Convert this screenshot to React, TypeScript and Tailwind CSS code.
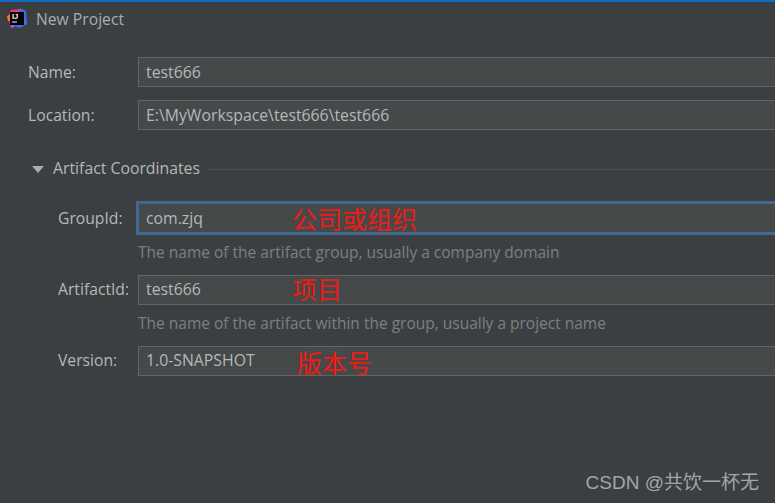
import React from 'react';

const uiFont = "font-['Open_Sans','Noto_Sans_CJK_SC',sans-serif]";

const Field: React.FC<{
  label: string;
  value: string;
  indent?: boolean;
  focused?: boolean;
  nudge?: boolean;
  note?: string;
  noteClass?: string;
}> = ({ label, value, indent, focused, nudge, note, noteClass }) => (
  <div className="flex items-center">
    <div
      className={`w-[138px] shrink-0 text-[15.7px] text-[#b4b8ba] ${indent ? 'pl-[58px]' : 'pl-[28px]'} ${
        nudge ? 'pt-[2px]' : ''
      }`}
    >
      {label}
    </div>
    <div
      className={`relative flex h-[30px] w-[660px] shrink-0 items-center bg-[#45494a] text-[15.8px] text-[#b4b8ba] ${
        focused ? 'pl-[8px] shadow-[0_0_0_2px_#3f6892,inset_0_0_0_1px_#3f6892]' : 'border border-[#646464] pl-[7px]'
      } ${nudge ? 'pt-[2px]' : ''}`}
    >
      {value}
      {note && (
        <span className={`absolute font-['Noto_Sans_CJK_SC',sans-serif] text-[25px] leading-none text-[#f01a14] ${noteClass}`}>
          {note}
        </span>
      )}
    </div>
  </div>
);

const Logo = () => (
  <svg width="21" height="21" viewBox="0 0 21 21" className="shrink-0">
    <path d="M1 9 L4 2 L13 1 L13 12 L6 19 L3 15 Z" fill="#f5317f" />
    <path d="M0 8 L4 6 L5 13 L1 13 Z" fill="#f97a12" />
    <path d="M13 0 L19 3 L20 16 L13 20 L7 18 Z" fill="#3b6fe0" />
    <path d="M2 13 L8 19 L4 20 Z" fill="#b74af7" />
    <rect x="3" y="4" width="14" height="13" fill="#000" />
    <text x="5" y="11" fontSize="7.5" fontWeight="700" fill="#fff" fontFamily="Liberation Sans, sans-serif">IJ</text>
    <rect x="5" y="13.5" width="5" height="1" fill="#fff" />
  </svg>
);

const App: React.FC = () => (
  <div className={`relative h-[503px] w-[775px] overflow-hidden border-t-2 border-[#0a6cc4] bg-[#3c3f41] ${uiFont}`}>
    <div className="flex h-[33px] items-center gap-[8px] pl-[7px] text-[15.7px] text-[#a9adaf]">
      <Logo />
      <span className="pt-[2px]">New Project</span>
    </div>

    <div className="mt-[22px] flex flex-col gap-[13px]">
      <Field label="Name:" value="test666" nudge />
      <Field label="Location:" value="E:\MyWorkspace\test666\test666" nudge />
    </div>

    <div className="mt-[28px] flex h-[20px] items-center pl-[32px] pt-[2px] text-[15.8px] text-[#b4b8ba]">
      <span className="h-0 w-0 border-x-[6px] border-t-[7px] border-x-transparent border-t-[#a9adaf]" />
      <span className="ml-[9px]">Artifact Coordinates</span>
      <span className="ml-[8px] h-px flex-1 bg-[#515151]" />
    </div>

    <div className="mt-[25px]">
      <Field label="GroupId:" value="com.zjq" indent focused nudge note="公司或组织" noteClass="left-[154px] top-[3px]" />
      <div className="mt-[9px] h-[20px] pl-[138px] text-[15.5px] leading-[20px] text-[#7c7f81]">
        The name of the artifact group, usually a company domain
      </div>
    </div>

    <div className="mt-[13px]">
      <Field label="ArtifactId:" value="test666" indent note="项目" noteClass="left-[153px] top-[0px]" />
      <div className="mt-[8px] h-[20px] pl-[138px] text-[15.5px] leading-[20px] text-[#7c7f81]">
        The name of the artifact within the group, usually a project name
      </div>
    </div>

    <div className="mt-[13px]">
      <Field label="Version:" value="1.0-SNAPSHOT" indent note="版本号" noteClass="left-[158px] top-[3px]" />
    </div>

    <div className="absolute bottom-[7px] right-[16px] font-['Liberation_Sans','Noto_Sans_CJK_SC',sans-serif] text-[19px] leading-[26px] text-[#a3a5a6]">
      CSDN @共饮一杯无
    </div>
  </div>
);

export default App;
